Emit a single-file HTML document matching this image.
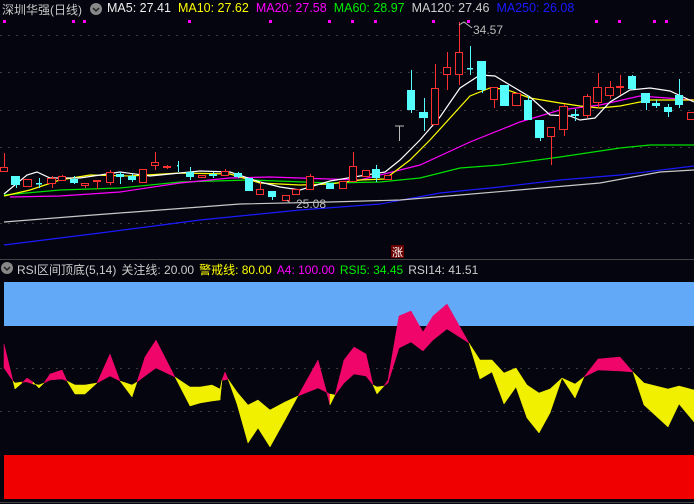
<!DOCTYPE html>
<html><head><meta charset="utf-8"><style>
body{margin:0;width:694px;height:504px;background:#04050e;overflow:hidden;font-family:"Liberation Sans","Noto Sans CJK SC",sans-serif;}
.h{position:absolute;font-size:12.5px;white-space:nowrap;color:#ccc;}
.h span{margin-right:5px}
.t span{margin-right:7px}
</style></head><body>
<svg id="s" width="694" height="504" style="position:absolute;left:0;top:0">
<g stroke="#3a3a3a" stroke-dasharray="2,6" stroke-width="1">
<line x1="0" y1="35.5" x2="694" y2="35.5"/><line x1="0" y1="72.5" x2="694" y2="72.5"/><line x1="0" y1="110.5" x2="694" y2="110.5"/><line x1="0" y1="147.5" x2="694" y2="147.5"/><line x1="0" y1="223.5" x2="694" y2="223.5"/>
<line x1="0" y1="368.5" x2="694" y2="368.5"/><line x1="0" y1="411.5" x2="694" y2="411.5"/>
</g>
<line x1="0" y1="259.5" x2="694" y2="259.5" stroke="#444"/>
<line x1="0" y1="502.5" x2="694" y2="502.5" stroke="#444"/>
<rect x="4" y="282" width="690" height="44" fill="#62aaf8"/>
<rect x="4" y="455" width="690" height="44" fill="#f00000"/>
<g id="rsi"></g>
<g id="ma" fill="none" stroke-width="1.2">
<polyline stroke="#1a1aff" points="4,245 100,233 200,220 300,210 380,204 440,193 500,187 560,180 620,175 694,166"/>
<polyline stroke="#c8c8c8" points="4,222 80,216 160,210 240,204 330,202 400,200 460,195 530,189 600,183 660,172 694,170"/>
<polyline stroke="#00e000" points="4,195 60,190 120,188 180,182 250,180 330,183 380,182 420,178 460,168 500,165 560,157 620,148 650,145 694,145"/>
<polyline stroke="#ff00ff" points="10,197 60,196 120,192 180,183 230,178 270,177 330,179 360,180 420,165 470,142 520,122 560,110 600,105 640,96 694,100"/>
<polyline stroke="#ffff00" points="4,196 30,190 60,180 90,175 130,176 180,173 230,174 260,183 300,185 330,184 360,180 385,179 410,160 430,140 470,96 490,88 505,89 530,98 560,103 580,106 600,108 620,106 650,100 694,100"/>
<polyline stroke="#ffffff" points="4,194 27,175 37,172 50,178 80,178 120,172 150,176 200,171 230,172 260,182 280,187 300,190 330,181 360,176 385,172 400,160 420,140 440,117 460,88 480,75 495,76 510,85 530,97 550,115 570,116 580,120 595,118 610,102 630,90 650,88 670,91 694,102"/>
</g>
<g id="c"></g>
<g fill="#f0f"><rect x="3" y="20" width="3" height="3"/><rect x="72" y="20" width="3" height="3"/><rect x="83" y="20" width="3" height="3"/><rect x="188" y="20" width="3" height="3"/><rect x="269" y="20" width="3" height="3"/><rect x="328" y="20" width="3" height="3"/><rect x="351" y="20" width="3" height="3"/><rect x="374" y="20" width="3" height="3"/><rect x="432" y="20" width="3" height="3"/><rect x="467" y="20" width="3" height="3"/><rect x="595" y="20" width="3" height="3"/><rect x="618" y="20" width="3" height="3"/><rect x="653" y="20" width="3" height="3"/><rect x="665" y="20" width="3" height="3"/></g>
<polyline points="459,25 464,22 472,28" fill="none" stroke="#bbb"/>
<text x="473" y="34" fill="#bbb" font-size="12" font-family="Liberation Sans">34.57</text>
<polyline points="287,200 290,203 295,203" fill="none" stroke="#bbb"/>
<text x="296" y="208" fill="#bbb" font-size="12" font-family="Liberation Sans">25.08</text>
<rect x="391" y="245" width="13" height="13" fill="#6a0000"/>
<text x="392" y="256" fill="#fff" font-size="11" font-family="Noto Sans CJK SC">涨</text>
<circle cx="96" cy="9" r="6" fill="#888"/><polyline points="93,8 96,11 99,8" fill="none" stroke="#222" stroke-width="1.5"/>
<circle cx="7" cy="268" r="6" fill="#888"/><polyline points="4,267 7,270 10,267" fill="none" stroke="#222" stroke-width="1.5"/>
</svg>
<div class="h" style="left:2px;top:1px;font-size:12px;color:#c8c8c8">深圳华强(日线)</div>
<div class="h t" style="left:107px;top:1px;font-size:12.5px"><span style="color:#eee">MA5: 27.41</span><span style="color:#ff0">MA10: 27.62</span><span style="color:#f0f">MA20: 27.58</span><span style="color:#0e0">MA60: 28.97</span><span style="color:#ccc">MA120: 27.46</span><span style="color:#1a1aff">MA250: 26.08</span></div>
<div class="h" style="left:17px;top:261px;font-size:12px"><span>RSI区间顶底(5,14)</span><span>关注线: 20.00</span><span style="color:#ff0">警戒线: 80.00</span><span style="color:#f0f">A4: 100.00</span><span style="color:#0e0">RSI5: 34.45</span><span>RSI14: 41.51</span></div>
<script>
var P=[[4,344,368],[13,381,381],[15,389,383],[22,383,382],[27,378,382],[33,382,384],[39,388,385],[44,383,383],[50,374,380],[62,370,379],[67,381,381],[75,394,385],[85,394,385],[97,383,383],[110,354,376],[120,381,381],[132,397,385],[137,382,382],[145,357,376],[156,340,368],[175,377,377],[190,406,387],[200,403,387],[212,401,385],[220,400,389],[222,380,380],[225,372,380],[228,379,379],[237,404,392],[248,443,405],[258,428,400],[270,447,410],[285,420,402],[298,396,396],[318,360,388],[330,405,394],[335,395,395],[344,360,383],[354,347,374],[366,354,376],[373,385,385],[377,394,387],[384,386,386],[388,380,383],[399,316,348],[411,311,342],[423,332,351],[433,316,340],[447,304,329],[469,343,343],[480,379,360],[492,372,360],[504,404,373],[516,387,368],[527,418,385],[539,433,393],[550,413,389],[562,378,378],[575,398,384],[584,377,377],[598,359,370],[620,357,371],[633,372,372],[644,405,383],[668,427,389],[679,404,386],[694,422,390]];
var h='';for(var i=0;i<P.length-1;i++){var a=P[i],b=P[i+1];var d=(a[1]-a[2])+(b[1]-b[2]);h+='<polygon points="'+a[0]+','+a[1]+' '+b[0]+','+b[1]+' '+b[0]+','+b[2]+' '+a[0]+','+a[2]+'" fill="'+(d<0?'#f0066a':'#f0f000')+'" stroke="'+(d<0?'#f0066a':'#f0f000')+'" stroke-width="0.5"/>';}
document.getElementById('rsi').innerHTML=h;
var C=[[0,8,167,172,153,172,'r'],[11,20,176,185,176,188,'c'],[23,32,179,187,179,187,'r'],[36,42,183,184,178,188,'c'],[47,56,178,184,176,188,'r'],[58,66,176,181,175,181,'r'],[70,78,179,183,176,184,'c'],[81,89,183,186,183,188,'r'],[93,101,180,182,180,189,'r'],[106,114,172,183,170,185,'r'],[116,124,174,177,172,184,'c'],[128,136,176,180,174,182,'c'],[139,147,169,183,169,183,'r'],[151,159,162,166,152,170,'r'],[163,171,166,168,165,169,'r'],[177,179,165,166,161,172,'c'],[186,194,172,177,167,180,'c'],[198,206,175,178,175,178,'r'],[209,217,174,176,172,178,'c'],[221,229,171,176,169,176,'r'],[234,242,173,177,172,178,'c'],[245,253,178,191,178,191,'c'],[256,264,189,195,182,195,'r'],[268,276,191,197,191,200,'c'],[282,290,195,201,195,201,'r'],[292,300,189,195,189,195,'r'],[306,314,176,190,174,190,'r'],[326,334,183,189,183,189,'c'],[339,347,181,189,181,189,'r'],[349,357,166,182,152,182,'r'],[362,370,170,177,170,177,'r'],[372,380,169,178,165,182,'c'],[384,392,175,180,175,180,'r'],[407,415,90,110,70,113,'c'],[419,428,112,118,98,131,'c'],[431,439,88,125,64,125,'r'],[443,451,67,75,52,90,'r'],[455,463,52,75,22,85,'r'],[467,473,68,69,46,75,'c'],[477,486,61,90,61,93,'c'],[490,498,87,100,87,108,'r'],[500,509,85,106,85,106,'c'],[512,521,93,106,93,106,'r'],[524,532,100,120,96,120,'c'],[535,544,120,138,120,141,'c'],[547,555,127,137,127,165,'r'],[559,568,106,130,104,136,'r'],[571,579,114,116,109,121,'c'],[583,591,96,116,94,118,'r'],[593,602,87,103,73,108,'r'],[605,614,87,96,81,99,'r'],[616,624,86,88,75,95,'r'],[628,636,76,89,75,90,'c'],[641,650,93,103,93,110,'c'],[652,660,103,106,100,108,'c'],[664,672,107,112,104,117,'c'],[675,683,95,105,79,108,'c'],[687,700,112,120,105,126,'r']];
var g='<line x1="399.5" y1="126" x2="399.5" y2="141" stroke="#bbb"/><line x1="395" y1="126" x2="404" y2="126" stroke="#bbb"/>';
C.forEach(function(k){var m=(k[0]+k[1])/2,col=k[6]=='r'?'#ff3030':'#55ffff';var xm=Math.round(m)+0.5;
g+='<line x1="'+xm+'" y1="'+k[4]+'" x2="'+xm+'" y2="'+k[5]+'" stroke="'+col+'"/>';
if(k[6]=='r')g+='<rect x="'+(k[0]+0.5)+'" y="'+(k[2]+0.5)+'" width="'+(k[1]-k[0]-1)+'" height="'+Math.max(1,k[3]-k[2]-1)+'" fill="#04050e" stroke="'+col+'"/>';
else g+='<rect x="'+k[0]+'" y="'+k[2]+'" width="'+(k[1]-k[0])+'" height="'+Math.max(1.5,k[3]-k[2])+'" fill="'+col+'"/>';});
document.getElementById('c').innerHTML=g;
</script>
</body></html>
